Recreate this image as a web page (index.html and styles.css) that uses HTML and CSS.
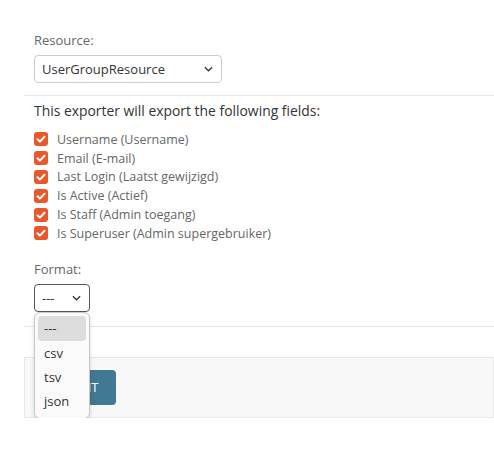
FILE: index.html
```html
<!DOCTYPE html>
<html>
<head>
<meta charset="utf-8">
<link rel="stylesheet" href="styles.css">
</head>
<body>
<div class="page">
  <div class="row">
    <label class="lbl">Resource:</label>
    <div class="select res"><span>UserGroupResource</span><svg class="chev" viewBox="0 0 10 6" width="9" height="6"><path d="M1 1l4 4 4-4" fill="none" stroke="#333" stroke-width="1.4"/></svg></div>
  </div>
  <div class="row fields">
    <p class="intro">This exporter will export the following fields:</p>
    <ul class="checks">
      <li><span class="cb"><svg viewBox="0 0 14 14" width="14" height="14"><path d="M3.5 7.2l2.4 2.4 4.6-4.8" fill="none" stroke="#fff" stroke-width="2" stroke-linecap="round" stroke-linejoin="round"/></svg></span>Username (Username)</li>
      <li><span class="cb"><svg viewBox="0 0 14 14" width="14" height="14"><path d="M3.5 7.2l2.4 2.4 4.6-4.8" fill="none" stroke="#fff" stroke-width="2" stroke-linecap="round" stroke-linejoin="round"/></svg></span>Email (E-mail)</li>
      <li><span class="cb"><svg viewBox="0 0 14 14" width="14" height="14"><path d="M3.5 7.2l2.4 2.4 4.6-4.8" fill="none" stroke="#fff" stroke-width="2" stroke-linecap="round" stroke-linejoin="round"/></svg></span>Last Login (Laatst gewijzigd)</li>
      <li><span class="cb"><svg viewBox="0 0 14 14" width="14" height="14"><path d="M3.5 7.2l2.4 2.4 4.6-4.8" fill="none" stroke="#fff" stroke-width="2" stroke-linecap="round" stroke-linejoin="round"/></svg></span>Is Active (Actief)</li>
      <li><span class="cb"><svg viewBox="0 0 14 14" width="14" height="14"><path d="M3.5 7.2l2.4 2.4 4.6-4.8" fill="none" stroke="#fff" stroke-width="2" stroke-linecap="round" stroke-linejoin="round"/></svg></span>Is Staff (Admin toegang)</li>
      <li><span class="cb"><svg viewBox="0 0 14 14" width="14" height="14"><path d="M3.5 7.2l2.4 2.4 4.6-4.8" fill="none" stroke="#fff" stroke-width="2" stroke-linecap="round" stroke-linejoin="round"/></svg></span>Is Superuser (Admin supergebruiker)</li>
    </ul>
    <label class="lbl fmt">Format:</label>
    <div class="fmtwrap">
      <div class="select fmtsel"><span>---</span><svg class="chev" viewBox="0 0 10 6" width="9" height="6"><path d="M1 1l4 4 4-4" fill="none" stroke="#333" stroke-width="1.4"/></svg></div>
      <ul class="menu">
        <li class="on">---</li>
        <li>csv</li>
        <li>tsv</li>
        <li>json</li>
      </ul>
    </div>
  </div>
  <div class="gap"></div>
  <div class="submit-row">
    <button class="btn">SUBMIT</button>
  </div>
</div>
</body>
</html>
```
FILE: styles.css
```css
html, body {
  margin: 0;
  padding: 0;
  background: #fff;
}
body {
  font-family: "Open Sans", "Noto Sans", sans-serif;
  font-size: 13px;
  color: #333;
}
.page {
  padding: 31px 0 0 24px;
}
.row {
  padding: 0 0 0 10px;
}
.row.fields {
  border-top: 1px solid #e8e8e8;
  padding-top: 5px;
  padding-bottom: 14px;
}
.lbl {
  display: block;
  color: #666;
  font-size: 13px;
  line-height: 18px;
  margin-bottom: 6px;
}
.select {
  box-sizing: border-box;
  height: 28px;
  border: 1px solid #ccc;
  border-radius: 4px;
  display: flex;
  align-items: center;
  justify-content: space-between;
  padding: 0 8px 0 7px;
  color: #333;
  font-size: 13px;
  background: #fff;
}
.res {
  width: 188px;
  margin-bottom: 12px;
}
.intro {
  margin: 0 0 9px 0;
  font-size: 13.9px;
  line-height: 20px;
  color: #333;
}
.checks {
  list-style: none;
  margin: 0;
  padding: 0;
}
.checks li {
  display: flex;
  align-items: center;
  height: 18.8px;
  color: #666;
  font-size: 12.5px;
}
.cb {
  width: 14px;
  height: 14px;
  border-radius: 3px;
  background: #e9572a;
  margin-right: 9px;
  display: flex;
}
.fmt {
  margin-top: 17px;
}
.fmtwrap {
  position: relative;
  width: 56px;
}
.fmtsel {
  width: 56px;
  border-color: #555;
  border-radius: 4px;
}
.menu {
  position: absolute;
  left: 0;
  top: 28px;
  width: 56px;
  box-sizing: border-box;
  margin: 0;
  padding: 3px 3px 5px;
  list-style: none;
  background: #fafafa;
  border: 1px solid #c8c8c8;
  border-radius: 6px;
  box-shadow: 0 2px 4px rgba(0,0,0,0.15);
  z-index: 5;
}
.menu li {
  height: 24px;
  line-height: 24px;
  padding-left: 6px;
  color: #333;
  font-size: 13px;
  border-radius: 4px;
}
.menu li.on {
  height: 25px;
  line-height: 25px;
  background: #dcdcdc;
}
.gap {
  border-top: 1px solid #e8e8e8;
  height: 30px;
}
.submit-row {
  background: #f8f8f8;
  border: 1px solid #e8e8e8;
  padding: 12px 0 0 9px;
  box-sizing: border-box;
  height: 61px;
}
.btn {
  background: #417893;
  color: #fff;
  border: none;
  border-radius: 4px;
  height: 35px;
  padding: 0 17px;
  font-family: "Open Sans", sans-serif;
  font-size: 13px;
}
```
